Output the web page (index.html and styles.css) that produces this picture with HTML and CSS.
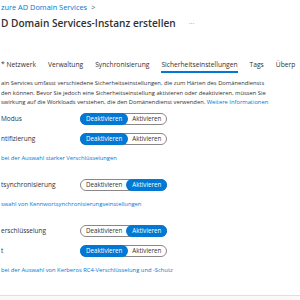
FILE: index.html
```html
<!DOCTYPE html>
<html lang="de">
<head>
    <meta charset="UTF-8">
    <meta name="viewport" content="width=device-width, initial-scale=1.0">
    <title>Azure AD Domain Services-Instanz erstellen</title>
    <link rel="stylesheet" href="styles.css">
</head>
<body>
    <div class="page">
        <nav class="crumbs">
            <a href="#">zure AD Domain Services</a><span class="sep">&gt;</span>
        </nav>
        <header class="title-bar">
            <h1>D Domain Services-Instanz erstellen</h1>
            <span class="more">&middot;&middot;&middot;</span>
        </header>
        <ul class="tabs">
            <li>* Netzwerk</li>
            <li>Verwaltung</li>
            <li>Synchronisierung</li>
            <li class="active">Sicherheitseinstellungen</li>
            <li>Tags</li>
            <li>Überp</li>
        </ul>
        <p class="intro">
            ain Services umfasst verschiedene Sicherheitseinstellungen, die zum Härten des Domänendiensts<br>
            den können. Bevor Sie jedoch eine Sicherheitseinstellung aktivieren oder deaktivieren, müssen Sie<br>
            swirkung auf die Workloads verstehen, die den Domänendienst verwenden. <a href="#">Weitere Informationen</a>
        </p>

        <div class="settings">
            <section class="group">
                <div class="row">
                    <span class="label">Modus</span>
                    <div class="toggle"><span class="opt on">Deaktivieren</span><span class="opt">Aktivieren</span></div>
                </div>
                <div class="row">
                    <span class="label">ntifizierung</span>
                    <div class="toggle"><span class="opt on">Deaktivieren</span><span class="opt">Aktivieren</span></div>
                </div>
                <a class="help" href="#">bei der Auswahl starker Verschlüsselungen</a>
            </section>
            <section class="group">
                <div class="row">
                    <span class="label">tsynchronisierung</span>
                    <div class="toggle"><span class="opt">Deaktivieren</span><span class="opt on">Aktivieren</span></div>
                </div>
                <a class="help" href="#">swahl von Kennwortsynchronisierungseinstellungen</a>
            </section>
            <section class="group">
                <div class="row">
                    <span class="label">erschlüsselung</span>
                    <div class="toggle"><span class="opt">Deaktivieren</span><span class="opt on">Aktivieren</span></div>
                </div>
                <div class="row">
                    <span class="label">t</span>
                    <div class="toggle"><span class="opt on">Deaktivieren</span><span class="opt">Aktivieren</span></div>
                </div>
                <a class="help" href="#">bei der Auswahl von Kerberos RC4-Verschlüsselung und -Schutz</a>
            </section>
        </div>
    </div>
    <footer class="footer"></footer>
</body>
</html>
```

FILE: styles.css
```css
html, body {
    margin: 0;
    height: 100%;
    overflow: hidden;
}
body {
    font-family: "Open Sans", "Noto Sans", sans-serif;
    font-size: 5.8px;
    color: #323130;
    background: #fff;
    position: relative;
}
a {
    color: #0078d4;
    text-decoration: none;
}
.page {
    padding-left: 1px;
}
.crumbs {
    padding-top: 2px;
    line-height: 10px;
    font-size: 7.4px;
    white-space: nowrap;
}
.crumbs .sep {
    color: #605e5c;
    margin-left: 4px;
}
.title-bar {
    display: flex;
    align-items: center;
    gap: 13px;
    margin-top: 4px;
    height: 14px;
}
.title-bar h1 {
    margin: 0;
    font-size: 10.1px;
    font-weight: 600;
    line-height: 14px;
    white-space: nowrap;
}
.more {
    color: #8a8886;
    font-size: 7px;
}
.tabs {
    display: flex;
    gap: 12px;
    list-style: none;
    margin: 30px 0 0;
    padding: 0;
    font-size: 6.7px;
    white-space: nowrap;
}
.tabs li {
    line-height: 10px;
    padding-bottom: 1px;
    border-bottom: 2px solid transparent;
}
.tabs li.active {
    border-bottom-color: #0078d4;
}
.intro {
    margin: 6px 0 0;
    line-height: 9.5px;
    white-space: nowrap;
}
.settings {
    display: flex;
    flex-direction: column;
    gap: 15px;
    margin-top: 4px;
}
.group {
    display: flex;
    flex-direction: column;
    gap: 6px;
}
.row {
    display: grid;
    grid-template-columns: 79px auto;
    align-items: center;
    height: 14px;
    font-size: 6.5px;
}
.label {
    white-space: nowrap;
}
.toggle {
    display: inline-flex;
    justify-self: start;
    border: 1px solid #8a8886;
    border-radius: 7px;
    height: 10px;
    font-size: 6.2px;
}
.opt {
    line-height: 10px;
    padding: 0 5px;
    border-radius: 6px;
}
.opt.on {
    background: #0078d4;
    color: #fff;
    margin: -1px;
    line-height: 12px;
    padding: 0 6px;
}
.help {
    display: block;
    margin-top: 1px;
    line-height: 10px;
    font-size: 5.8px;
    white-space: nowrap;
}
.footer {
    position: absolute;
    left: 0;
    right: 0;
    top: 295px;
    bottom: 0;
    border-top: 1px solid #e1dfdd;
    background: #faf9f8;
}
```
